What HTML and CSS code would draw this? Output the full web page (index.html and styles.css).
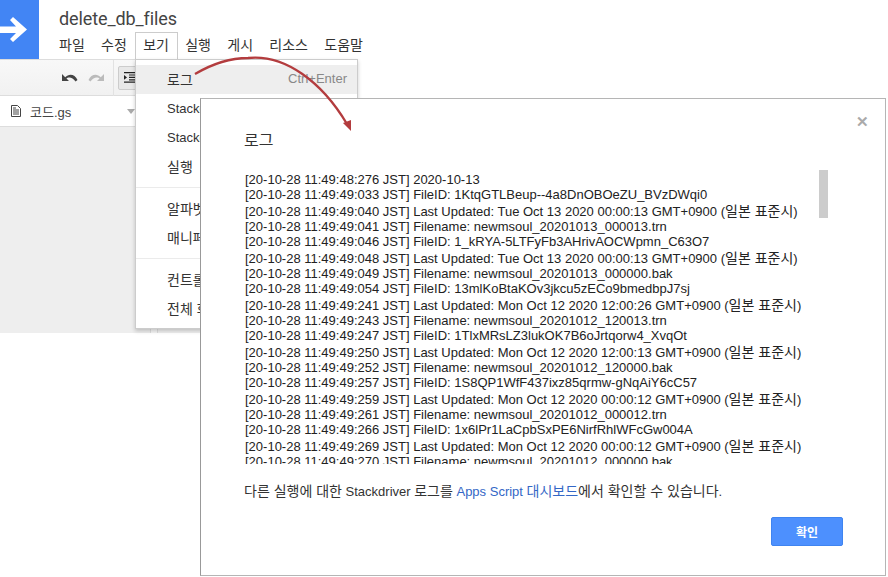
FILE: index.html
```html
<!DOCTYPE html>
<html lang="ko">
<head>
<meta charset="utf-8">
<title>delete_db_files</title>
<link rel="stylesheet" href="styles.css">
</head>
<body>
<div class="app">
  <header class="header">
    <div class="logo">
      <svg width="39" height="59" viewBox="0 0 39 59"><path d="M0 26.500h16l-6-6.500 3-3 14 12.500-14 12.500-3-3 6-6h-16z" fill="#fff"/></svg>
    </div>
    <div class="titles">
      <div class="doc-title">delete_db_files</div>
      <nav class="menubar">
        <span class="mitem">파일</span>
        <span class="mitem">수정</span>
        <span class="mitem">보기</span>
        <span class="mitem">실행</span>
        <span class="mitem">게시</span>
        <span class="mitem">리소스</span>
        <span class="mitem">도움말</span>
      </nav>
    </div>
  </header>
  <div class="toolbar">
    <svg class="tool-undo" width="16" height="10" viewBox="0 0 16 10"><path d="M0 1v7h7L4.500 5.500C6 4 10.500 3.500 13.500 8.500L15.500 7C13 1 7 0 3.200 4.200z" fill="#444"/></svg>
    <svg class="tool-redo" width="16" height="10" viewBox="0 0 16 10"><path d="M16 1v7H9l2.500-2.500C10 4 5.500 3.500 2.500 8.500L.5 7C3 1 9 0 12.800 4.200z" fill="#bbb"/></svg>
    <span class="tool-sep"></span>
    <span class="tool-btn">
      <svg width="12" height="11" viewBox="0 0 12 11"><path d="M0 0h12v1.200H0zM5 2.400h7v1.200H5zM5 4.800h7V6H5zM5 7.200h7v1.200H5zM0 9.600h12v1.200H0zM0 3l3 2.400L0 7.800z" fill="#222"/></svg>
    </span>
  </div>
  <div class="files">
    <div class="file-tab">
      <svg width="10" height="12" viewBox="0 0 10 12"><path d="M.5.500h6l3 3v8h-9zM2 5h6M2 7h6M2 9h6M2 3h3" fill="none" stroke="#444"/></svg>
      <span class="file-name">코드.gs</span>
      <span class="caret"></span>
    </div>
  </div>
  <div class="workspace">
    <div class="panel"></div>
    <div class="splitter"></div>
    <div class="panel-rest"></div>
  </div>
</div>

<div class="tab-outline"></div>
<div class="menu">
  <div class="row selected"><span class="ko">로그</span><span class="hint">Ctrl+Enter</span></div>
  <div class="row en">Stackdriver <span class="ko">로깅</span></div>
  <div class="row en">Stackdriver <span class="ko">오류</span></div>
  <div class="row"><span class="ko">실행</span></div>
  <div class="rule"></div>
  <div class="row"><span class="ko">알파벳순 정렬</span></div>
  <div class="row"><span class="ko">매니페스트 파일</span></div>
  <div class="rule"></div>
  <div class="row"><span class="ko">컨트롤 문자 표시</span></div>
  <div class="row"><span class="ko">전체 화면</span></div>
</div>

<section class="dialog">
  <h1 class="dlg-title">로그</h1>
  <span class="close">✕</span>
  <span class="thumb"></span>
  <div class="logbox">
    <div class="group">
      <div>[20-10-28 11:49:48:276 JST] 2020-10-13</div>
      <div>[20-10-28 11:49:49:033 JST] FileID: 1KtqGTLBeup--4a8DnOBOeZU_BVzDWqi0</div>
    </div>
    <div class="group">
      <div>[20-10-28 11:49:49:040 JST] Last Updated: Tue Oct 13 2020 00:00:13 GMT+0900 (<span class="ko">일본 표준시</span>)</div>
      <div>[20-10-28 11:49:49:041 JST] Filename: newmsoul_20201013_000013.trn</div>
      <div>[20-10-28 11:49:49:046 JST] FileID: 1_kRYA-5LTFyFb3AHrivAOCWpmn_C63O7</div>
    </div>
    <div class="group">
      <div>[20-10-28 11:49:49:048 JST] Last Updated: Tue Oct 13 2020 00:00:13 GMT+0900 (<span class="ko">일본 표준시</span>)</div>
      <div>[20-10-28 11:49:49:049 JST] Filename: newmsoul_20201013_000000.bak</div>
      <div>[20-10-28 11:49:49:054 JST] FileID: 13mlKoBtaKOv3jkcu5zECo9bmedbpJ7sj</div>
    </div>
    <div class="group">
      <div>[20-10-28 11:49:49:241 JST] Last Updated: Mon Oct 12 2020 12:00:26 GMT+0900 (<span class="ko">일본 표준시</span>)</div>
      <div>[20-10-28 11:49:49:243 JST] Filename: newmsoul_20201012_120013.trn</div>
      <div>[20-10-28 11:49:49:247 JST] FileID: 1TlxMRsLZ3lukOK7B6oJrtqorw4_XvqOt</div>
    </div>
    <div class="group">
      <div>[20-10-28 11:49:49:250 JST] Last Updated: Mon Oct 12 2020 12:00:13 GMT+0900 (<span class="ko">일본 표준시</span>)</div>
      <div>[20-10-28 11:49:49:252 JST] Filename: newmsoul_20201012_120000.bak</div>
      <div>[20-10-28 11:49:49:257 JST] FileID: 1S8QP1WfF437ixz85qrmw-gNqAiY6cC57</div>
    </div>
    <div class="group">
      <div>[20-10-28 11:49:49:259 JST] Last Updated: Mon Oct 12 2020 00:00:12 GMT+0900 (<span class="ko">일본 표준시</span>)</div>
      <div>[20-10-28 11:49:49:261 JST] Filename: newmsoul_20201012_000012.trn</div>
      <div>[20-10-28 11:49:49:266 JST] FileID: 1x6lPr1LaCpbSxPE6NirfRhlWFcGw004A</div>
    </div>
    <div class="group">
      <div>[20-10-28 11:49:49:269 JST] Last Updated: Mon Oct 12 2020 00:00:12 GMT+0900 (<span class="ko">일본 표준시</span>)</div>
      <div>[20-10-28 11:49:49:270 JST] Filename: newmsoul_20201012_000000.bak</div>
    </div>
  </div>
  <p class="note"><span class="ko">다른 실행에 대한</span> Stackdriver <span class="ko">로그를</span> <a class="link">Apps Script <span class="ko">대시보드</span></a><span class="ko">에서 확인할 수 있습니다</span>.</p>
  <div class="actions"><button class="ok">확인</button></div>
</section>

<svg class="arrow" width="888" height="577" viewBox="0 0 888 577">
  <path d="M195 74C212 64 230 58 248 58C285 54 322 82 347 124" fill="none" stroke="#b33c3e" stroke-width="2.300"/>
  <path d="M343 123L351 120L351 131z" fill="#b33c3e"/>
</svg>
</body>
</html>
```
FILE: styles.css
```css
* { box-sizing: border-box; }
html, body { margin: 0; padding: 0; }
body {
  position: relative;
  width: 888px;
  height: 577px;
  overflow: hidden;
  background: #fff;
  color: #333;
  font-family: "Liberation Sans", "Noto Sans CJK KR", sans-serif;
}
.ko { font-size: 14px; }
.app { display: flex; flex-direction: column; height: 333px; }

.header { display: flex; height: 59px; }
.logo { width: 39px; height: 59px; background: #4285f4; }
.logo svg { display: block; }
.titles { padding-left: 20px; }
.doc-title { font-size: 18px; line-height: 22px; padding-top: 8px; color: #444; font-family: Roboto, "Liberation Sans", sans-serif; letter-spacing: -.1px; }
.menubar { display: flex; margin-top: 4px; font-size: 14px; line-height: 22px; color: #333; }
.mitem { padding-right: 16.300px; white-space: nowrap; }

.toolbar {
  display: flex;
  align-items: center;
  width: 358px;
  height: 37px;
  padding-left: 62px;
  background: linear-gradient(#f8f8f8, #f1f1f1);
  border-top: 1px solid #ddd;
  border-bottom: 1px solid #ddd;
}
.tool-redo { margin-left: 10px; }
.tool-sep { width: 1px; height: 36px; margin-left: 9px; background: #e2e2e2; }
.tool-btn {
  display: flex;
  align-items: center;
  width: 20px;
  height: 24px;
  margin-left: 4px;
  padding-left: 5px;
  background: #e8e8e8;
  border: 1px solid #ccc;
  border-radius: 2px;
}
.tool-btn svg { flex: none; }
.files { width: 150px; height: 31px; background: #fff; border-bottom: 1px solid #ddd; }
.file-tab { display: flex; align-items: center; height: 30px; padding-left: 11px; }
.file-name { margin-left: 9px; font-size: 13px; color: #444; }
.caret { margin-left: auto; margin-right: 15px; border: 4px solid transparent; border-top: 5px solid #aaa; border-bottom: 0; }

.workspace { flex: 1; display: flex; width: 200px; background: #eee; }
.panel { width: 150px; }
.splitter { width: 8px; background: #f5f5f5; border-left: 1px solid #ddd; border-right: 1px solid #ddd; }
.panel-rest { flex: 1; background: #f0f0f0; }

.tab-outline {
  position: absolute;
  left: 135px;
  top: 32px;
  width: 43px;
  height: 28px;
  border: 1px solid #ccc;
  border-bottom: 0;
}
.menu {
  position: absolute;
  left: 135px;
  top: 59px;
  width: 223px;
  height: 270px;
  padding-top: 5px;
  background: #fff;
  border: 1px solid #ccc;
  box-shadow: 0 2px 4px rgba(0,0,0,.2);
  font-size: 13px;
  color: #333;
}
.row { display: flex; justify-content: flex-start; align-items: center; gap: 4px; height: 29px; padding: 0 10px 2px 31px; white-space: nowrap; }
.row.en { padding-bottom: 0; }
.row.selected { justify-content: space-between; background: #eee; }
.hint { color: #888; font-size: 13px; }
.rule { height: 1px; margin: 6px 0; background: #ebebeb; }

.dialog {
  position: absolute;
  left: 200px;
  top: 98px;
  width: 686px;
  height: 478px;
  padding: 0 43px;
  background: #fff;
  border: 1px solid #b5b5b5;
  border-left-color: #999;
}
.dlg-title { margin: 32px 0 0; font-size: 16px; line-height: 20px; font-weight: 400; color: #333; }
.close { position: absolute; right: 16px; top: 14px; font-size: 15px; line-height: 18px; font-weight: 700; color: #aaa; }
.thumb { position: absolute; left: 618px; top: 71px; width: 9px; height: 48px; background: #ccc; }
.logbox { height: 292px; margin-top: 21px; padding-left: 1px; overflow: hidden; font-size: 13px; line-height: 15px; color: #222; white-space: nowrap; }
.group { margin-bottom: 2px; }
.note { margin: 19px 0 0; font-size: 13px; line-height: 16px; color: #333; }
.link { color: #3367c6; }
.actions { display: flex; justify-content: flex-end; margin: 17px -1px 0 0; }
.ok {
  width: 72px;
  height: 29px;
  padding: 0;
  background: #4d90fe;
  border: 1px solid #3f84f0;
  border-radius: 2px;
  color: #fff;
  font-family: inherit;
  font-size: 12px;
  font-weight: 700;
}
.arrow { position: absolute; left: 0; top: 0; pointer-events: none; }
```
